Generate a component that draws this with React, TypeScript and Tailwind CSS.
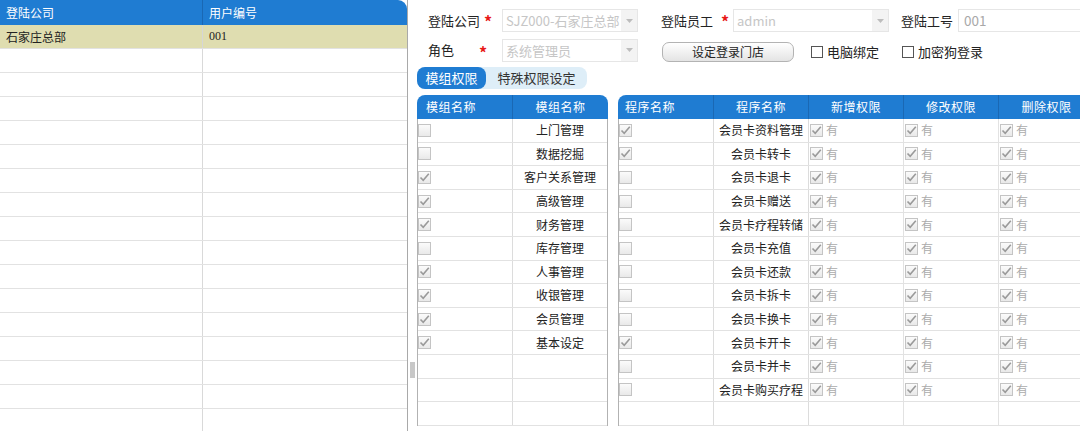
import React from "react";

const BLUE = "bg-[#1f7cd2]";

function GrayCheck({ checked }: { checked: boolean }) {
  return (
    <span className="inline-flex w-[13px] h-[13px] shrink-0 items-center justify-center border border-[#c4c4c4] bg-gradient-to-b from-[#fbfbfb] to-[#e9e9e9]">
      {checked && (
        <svg width="11" height="11" viewBox="0 0 11 11">
          <path d="M1.5 5.5 L4.2 8.3 L9.8 1.8" fill="none" stroke="#9a9a9a" strokeWidth="1.6" />
        </svg>
      )}
    </span>
  );
}

function Select({ w, text }: { w: string; text: string }) {
  return (
    <div className={`${w} h-[23px] flex border border-[#e6e6e6] bg-white shrink-0`}>
      <div className="flex-1 pl-[3px] text-[13px] leading-[21px] text-[#c6c6c6] whitespace-nowrap overflow-hidden">{text}</div>
      <div className="w-[16px] bg-[#f3f3f3] flex items-center justify-center">
        <svg width="7" height="4" viewBox="0 0 7 4">
          <path d="M0 0 L7 0 L3.5 4 Z" fill="#bdbdbd" />
        </svg>
      </div>
    </div>
  );
}

const Star = () => <span className="text-[#e81818] text-[16px] font-bold leading-none relative top-[2px]">*</span>;

const modules: [string, boolean][] = [
  ["上门管理", false],
  ["数据挖掘", false],
  ["客户关系管理", true],
  ["高级管理", true],
  ["财务管理", true],
  ["库存管理", false],
  ["人事管理", true],
  ["收银管理", true],
  ["会员管理", true],
  ["基本设定", true],
  ["", false],
  ["", false],
  ["", false],
];

const programs: [string, boolean][] = [
  ["会员卡资料管理", true],
  ["会员卡转卡", true],
  ["会员卡退卡", false],
  ["会员卡赠送", false],
  ["会员卡疗程转储", false],
  ["会员卡充值", false],
  ["会员卡还款", false],
  ["会员卡拆卡", false],
  ["会员卡换卡", false],
  ["会员卡开卡", true],
  ["会员卡并卡", false],
  ["会员卡购买疗程", false],
  ["", false],
];

function Perm() {
  return (
    <div className="w-[95px] shrink-0 h-full flex items-center pl-[1px] border-r border-[#e2e2e2]">
      <GrayCheck checked />
      <span className="ml-[3px] text-[12px] text-[#ababab]">有</span>
    </div>
  );
}

export default function App() {
  const leftRows = Array.from({ length: 17 });
  return (
    <div
      className="w-[1080px] h-[431px] overflow-hidden flex bg-white text-[#222]"
      style={{ fontFamily: '"Noto Sans CJK SC", "Noto Sans", sans-serif' }}
    >
      {/* Left panel */}
      <div className="w-[408px] shrink-0 flex flex-col border-r border-[#a9a9a9]">
        <div className={`h-[25px] shrink-0 flex ${BLUE} rounded-tr-[9px] text-white text-[12px]`}>
          <div className="w-[203px] border-r border-[#1a68b4] pl-[6px] leading-[25px]">登陆公司</div>
          <div className="flex-1 pl-[6px] leading-[25px]">用户编号</div>
        </div>
        <div className="h-[24px] shrink-0 flex bg-[#dfddb0] text-[12px] border-b border-[#e2e2e2]">
          <div className="w-[203px] border-r border-[#d6d6d6] pl-[6px] leading-[23px]">石家庄总部</div>
          <div className="flex-1 pl-[6px] leading-[23px]" style={{ fontFamily: '"Liberation Serif", serif' }}>001</div>
        </div>
        {leftRows.map((_, i) => (
          <div key={i} className="h-[24px] shrink-0 flex border-b border-[#e2e2e2]">
            <div className="w-[203px] border-r border-[#d9d9d9]" />
            <div className="flex-1" />
          </div>
        ))}
      </div>

      {/* Splitter */}
      <div className="w-[9px] shrink-0 pt-[362px] pl-[2px]">
        <div className="w-[5px] h-[16px] bg-[#c8c8c8]" />
      </div>

      {/* Right area */}
      <div className="flex-1 flex flex-col pt-[9px] text-[13px] min-w-0">
        {/* Row 1 */}
        <div className="h-[23px] flex items-center pl-[11px] whitespace-nowrap">
          <div className="w-[74px] flex items-center shrink-0">
            <span className="w-[52px]">登陆公司</span>
            <span className="ml-[4px]"><Star /></span>
          </div>
          <Select w="w-[136px]" text="SJZ000-石家庄总部" />
          <div className="ml-[23px] w-[72px] flex items-center shrink-0">
            <span className="w-[52px]">登陆员工</span>
            <span className="ml-[8px]"><Star /></span>
          </div>
          <Select w="w-[156px]" text="admin" />
          <span className="ml-[12px] w-[52px] shrink-0">登陆工号</span>
          <div className="ml-[5px] w-[140px] h-[23px] border border-[#e6e6e6] pl-[5px] text-[13.5px] leading-[21px] text-[#a8a8a8] shrink-0">001</div>
        </div>

        {/* Row 2 */}
        <div className="h-[22px] mt-[7px] flex items-center pl-[11px] whitespace-nowrap">
          <div className="w-[74px] flex items-center shrink-0">
            <span className="w-[51px]">角色</span>
            <Star />
          </div>
          <Select w="w-[136px]" text="系统管理员" />
          <button className="ml-[24px] w-[132px] h-[20px] mt-[3px] rounded-[7px] border border-[#b3b3b3] bg-gradient-to-b from-[#ffffff] to-[#e4e4e4] text-[12px] leading-[18px] text-[#222] shrink-0">
            设定登录门店
          </button>
          <div className="ml-[17px] w-[91px] flex items-center mt-[3px] shrink-0">
            <span className="w-[12px] h-[12px] border border-[#555] bg-white" />
            <span className="ml-[4px]">电脑绑定</span>
          </div>
          <div className="flex items-center mt-[3px]">
            <span className="w-[12px] h-[12px] border border-[#555] bg-white" />
            <span className="ml-[4px]">加密狗登录</span>
          </div>
        </div>

        {/* Tabs */}
        <div className="mt-[6px] flex">
          <div className="w-[170px] h-[22px] flex rounded-[8px] bg-[#deeef8]">
            <div className={`w-[69px] ${BLUE} rounded-[8px] text-white text-center leading-[22px]`}>模组权限</div>
            <div className="flex-1 text-center leading-[22px] text-[#333]">特殊权限设定</div>
          </div>
        </div>

        {/* Grids */}
        <div className="mt-[6px] flex gap-[10px] text-[12px]">
          {/* Module grid */}
          <div className="w-[191px] shrink-0 flex flex-col">
            <div className={`h-[24px] flex ${BLUE} rounded-t-[8px] text-white`}>
              <div className="w-[96px] border-r border-[#1a68b4] pl-[9px] leading-[24px] tracking-[0.5px]">模组名称</div>
              <div className="flex-1 text-center leading-[24px] tracking-[0.5px]">模组名称</div>
            </div>
            <div className="border-l border-r border-[#b2b2b2]">
              {modules.map(([name, c], i) => (
                <div key={i} className="h-[23.6px] flex border-b border-[#e2e2e2]">
                  <div className="w-[95px] border-r border-[#dcdcdc] flex items-center">
                    {name && <GrayCheck checked={c} />}
                  </div>
                  <div className="flex-1 flex items-center justify-center">{name}</div>
                </div>
              ))}
            </div>
          </div>

          {/* Program grid */}
          <div className="w-[500px] shrink-0 flex flex-col">
            <div className={`h-[24px] flex ${BLUE} rounded-tl-[8px] text-white whitespace-nowrap`}>
              <div className="w-[96px] border-r border-[#1a68b4] pl-[7px] leading-[24px] tracking-[0.5px]">程序名称</div>
              <div className="w-[95px] border-r border-[#1a68b4] text-center leading-[24px] tracking-[0.5px]">程序名称</div>
              <div className="w-[95px] border-r border-[#1a68b4] text-center leading-[24px] tracking-[0.5px]">新增权限</div>
              <div className="w-[95px] border-r border-[#1a68b4] text-center leading-[24px] tracking-[0.5px]">修改权限</div>
              <div className="w-[95px] text-center leading-[24px] tracking-[0.5px]">删除权限</div>
            </div>
            <div className="border-l border-[#b2b2b2]">
              {programs.map(([name, c], i) => (
                <div key={i} className="h-[23.6px] flex border-b border-[#e2e2e2] whitespace-nowrap">
                  <div className="w-[95px] shrink-0 border-r border-[#dcdcdc] flex items-center">
                    {name && <GrayCheck checked={c} />}
                  </div>
                  <div className="w-[95px] shrink-0 border-r border-[#dcdcdc] flex items-center justify-center overflow-hidden">{name}</div>
                  {name ? (
                    <>
                      <Perm />
                      <Perm />
                      <Perm />
                    </>
                  ) : (
                    <>
                      <div className="w-[95px] shrink-0 border-r border-[#e2e2e2]" />
                      <div className="w-[95px] shrink-0 border-r border-[#e2e2e2]" />
                      <div className="w-[95px] shrink-0 border-r border-[#e2e2e2]" />
                    </>
                  )}
                </div>
              ))}
            </div>
          </div>
        </div>
      </div>
    </div>
  );
}
